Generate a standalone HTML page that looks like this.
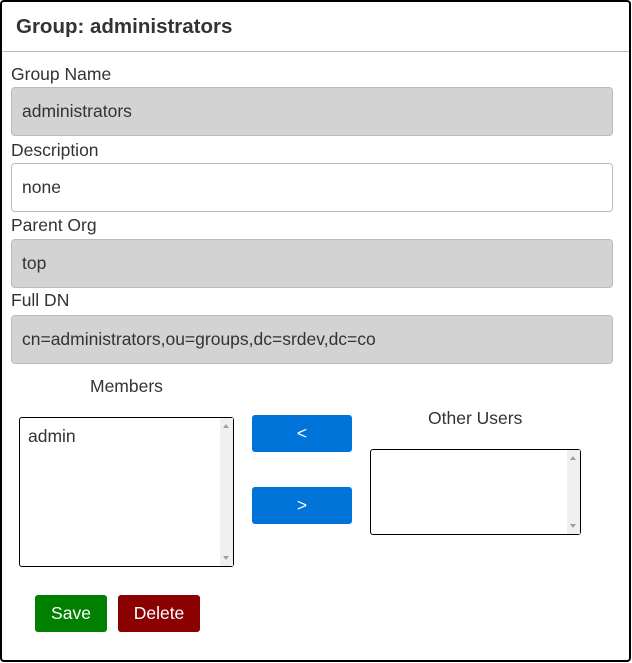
<!DOCTYPE html>
<html><head><style>
*{box-sizing:border-box}
body{margin:0;width:632px;height:663px;font-family:"Liberation Sans",sans-serif;color:#333;background:#fff;position:relative;overflow:hidden}
.frame{position:absolute;left:0;top:0;width:631px;height:662px;border:2px solid #000;border-radius:4px}
.h{position:absolute;left:16px;top:15px;font-size:20.5px;font-weight:bold;color:#333}
.hr{position:absolute;left:2px;right:3px;top:51px;height:1px;background:#bbb}
.lab{position:absolute;left:11px;font-size:17.5px;color:#333}
.in{position:absolute;left:11px;width:602px;height:49px;border:1px solid #bbb;border-radius:4px;background:#d3d3d3;font-size:17.5px;padding:13px 0 0 10px;color:#333}
.w{background:#fff}
.sel{position:absolute;border:1px solid #000;border-radius:3px;background:#fff}
.sb{position:absolute;right:0;top:0;bottom:0;width:13px;background:#f0f0f0}
.sb:before{content:"";position:absolute;left:3px;top:6px;border:3.5px solid transparent;border-bottom:4px solid #a0a0a0;border-top:0}
.sb:after{content:"";position:absolute;left:3px;bottom:6px;border:3.5px solid transparent;border-top:4px solid #a0a0a0;border-bottom:0}
.btn{position:absolute;border-radius:3px;color:#fff;font-size:17.5px;text-align:center}
</style></head><body>
<div class="frame"></div>
<div class="h">Group: administrators</div>
<div class="hr"></div>
<div class="lab" style="top:64px">Group Name</div>
<div class="in" style="top:87px">administrators</div>
<div class="lab" style="top:140px">Description</div>
<div class="in w" style="top:163px">none</div>
<div class="lab" style="top:215px">Parent Org</div>
<div class="in" style="top:239px">top</div>
<div class="lab" style="top:290px">Full DN</div>
<div class="in" style="top:315px">cn=administrators,ou=groups,dc=srdev,dc=co</div>
<div class="lab" style="left:90px;top:376px">Members</div>
<div class="sel" style="left:19px;top:417px;width:215px;height:150px"><div style="position:absolute;left:8px;top:8px;font-size:17.5px">admin</div><div class="sb"></div></div>
<div class="btn" style="left:252px;top:415px;width:100px;height:37px;background:#0074d9;line-height:37px">&lt;</div>
<div class="btn" style="left:252px;top:487px;width:100px;height:37px;background:#0074d9;line-height:37px">&gt;</div>
<div class="lab" style="left:428px;top:408px">Other Users</div>
<div class="sel" style="left:370px;top:449px;width:211px;height:86px"><div class="sb"></div></div>
<div class="btn" style="left:35px;top:595px;width:72px;height:37px;background:#008000;line-height:37px">Save</div>
<div class="btn" style="left:118px;top:595px;width:82px;height:37px;background:#8b0000;line-height:37px">Delete</div>
</body></html>
